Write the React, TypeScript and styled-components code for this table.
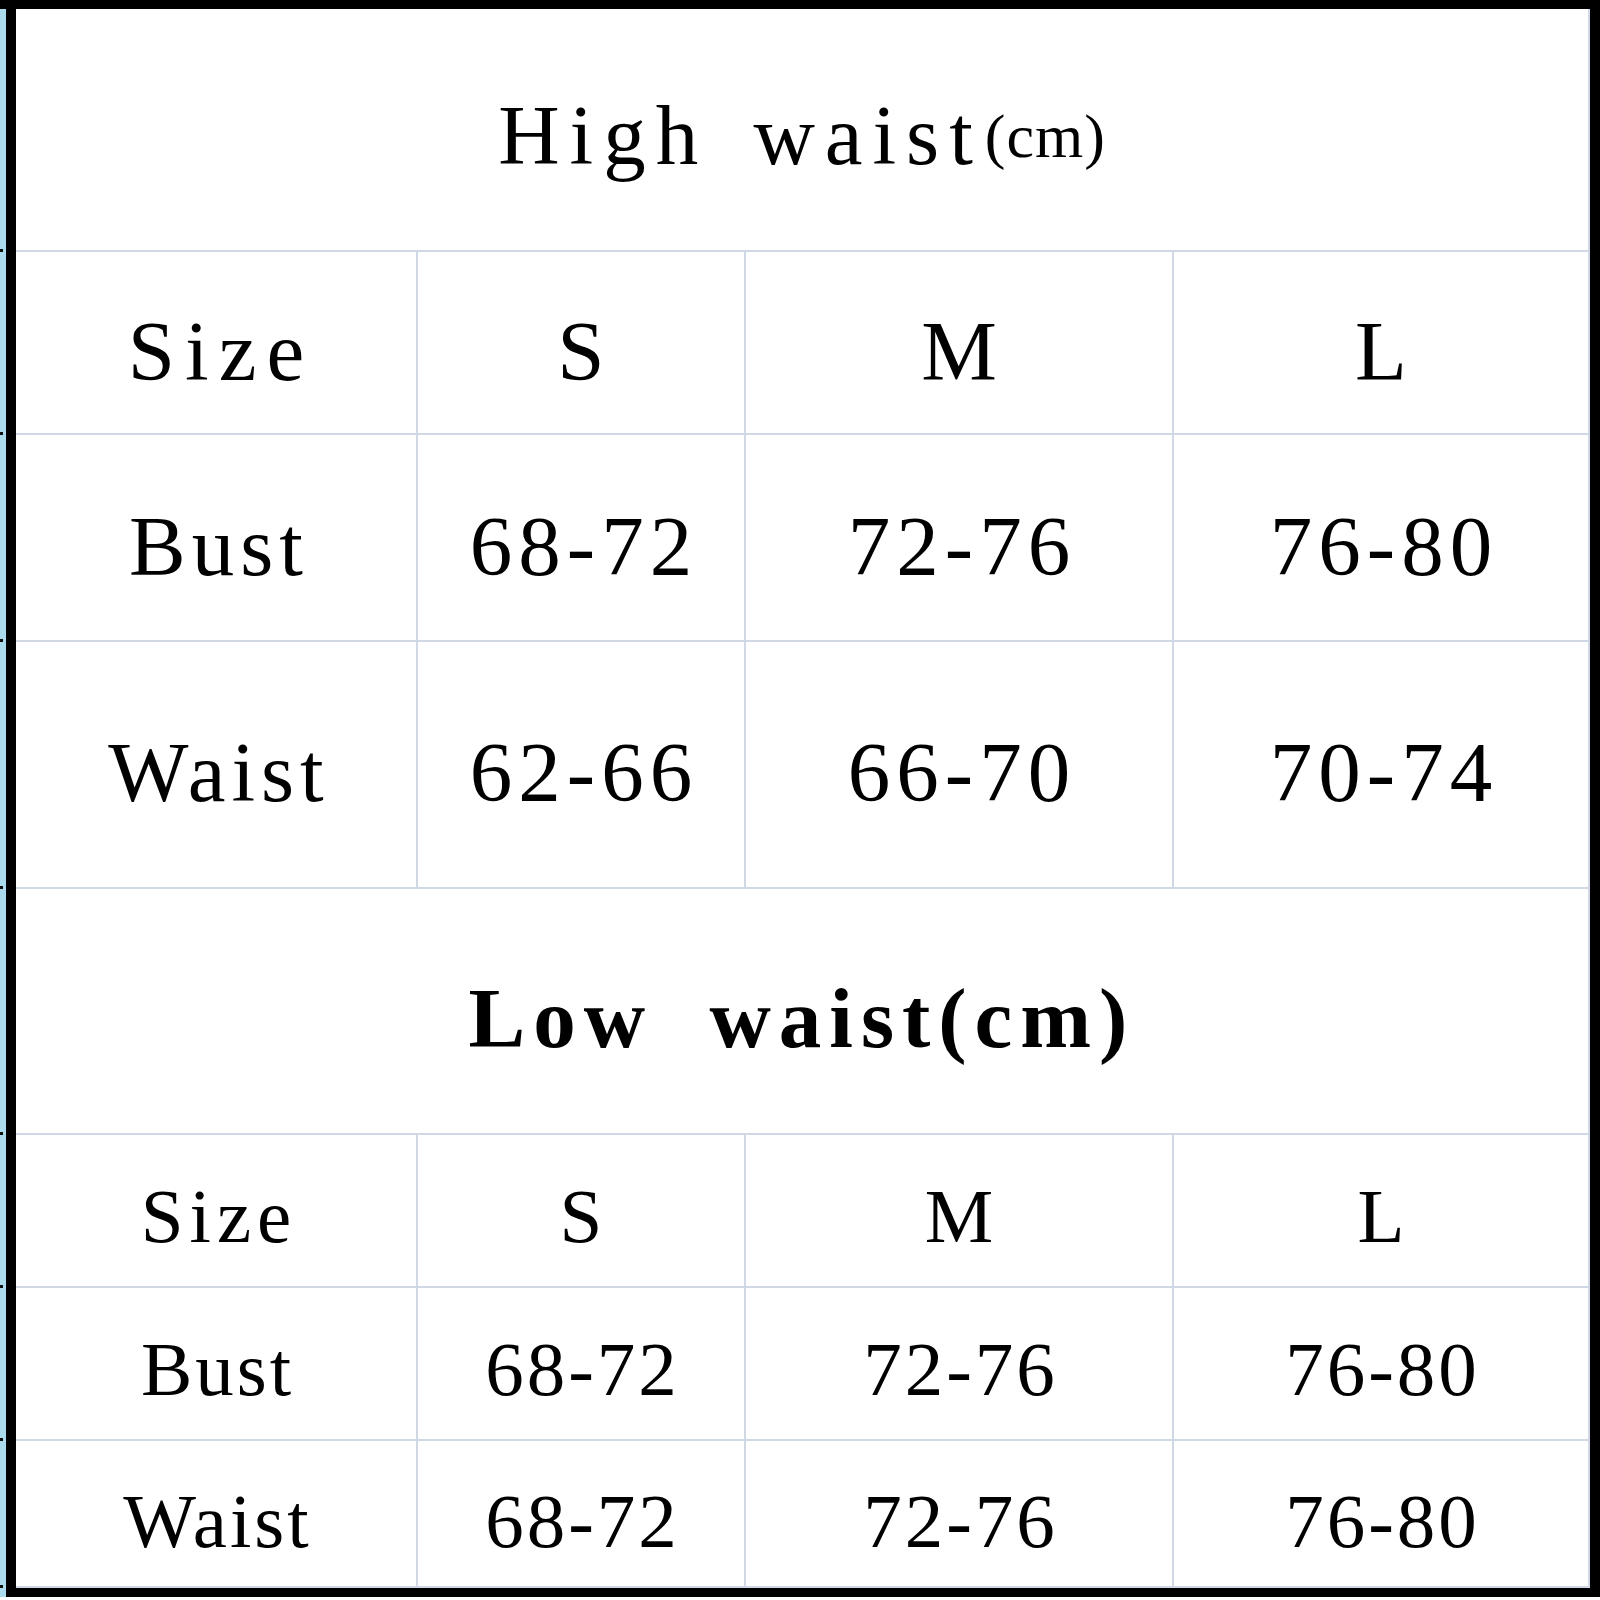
import React from "react";
import styled, { createGlobalStyle } from "styled-components";

const GlobalStyle = createGlobalStyle`
  html, body {
    margin: 0;
    padding: 0;
    background: #ffffff;
  }
`;

const LINE = "#d0d7e5";
const FONT = `"Liberation Serif", "Times New Roman", serif`;

// row heights inside the sheet, gridlines are the 2px gaps between them
const ROWS = [241, 181, 205, 245, 244, 151, 151, 145];

type Section = {
  title: string;
  unit: string;
  bold: boolean;
  big: boolean;
  rows: string[][];
};

const sections: Section[] = [
  {
    title: "High waist",
    unit: "(cm)",
    bold: false,
    big: true,
    rows: [
      ["Size", "S", "M", "L"],
      ["Bust", "68-72", "72-76", "76-80"],
      ["Waist", "62-66", "66-70", "70-74"],
    ],
  },
  {
    title: "Low waist",
    unit: "(cm)",
    bold: true,
    big: false,
    rows: [
      ["Size", "S", "M", "L"],
      ["Bust", "68-72", "72-76", "76-80"],
      ["Waist", "68-72", "72-76", "76-80"],
    ],
  },
];

const Page = styled.div`
  width: 1600px;
  height: 1600px;
  display: flex;
  flex-direction: column;
  overflow: hidden;
`;

const TopBar = styled.div`
  height: 9px;
  background: #000;
  flex: none;
`;

const Middle = styled.div`
  display: flex;
  flex: none;
`;

const RowHeader = styled.div`
  width: 6px;
  background: #aadcee;
  display: flex;
  flex-direction: column;
  gap: 2px;
`;

const HeaderSeg = styled.div<{ $h: number }>`
  height: ${(p) => p.$h}px;
  position: relative;
  &::after {
    content: "";
    position: absolute;
    left: 0;
    bottom: -2px;
    width: 3px;
    height: 3px;
    background: #111;
  }
`;

const Frame = styled.div`
  border-left: 10px solid #000;
  border-right: 10px solid #000;
  border-bottom: 9px solid #000;
`;

const Sheet = styled.div`
  display: grid;
  grid-template-columns: 400px 326px 426px 414px;
  grid-template-rows: ${ROWS.map((r) => `${r}px`).join(" ")};
  gap: 2px;
  padding: 0 2px 2px 0;
  background: ${LINE};
  width: 1572px;
`;

const Cell = styled.div<{ $size: number; $shift: number; $spacing: number }>`
  background: #fff;
  display: flex;
  align-items: center;
  justify-content: center;
  font-family: ${FONT};
  font-size: ${(p) => p.$size}px;
  line-height: 1;
  letter-spacing: ${(p) => p.$spacing}px;
  text-indent: ${(p) => p.$spacing}px;
  color: #000;
  padding-top: ${(p) => p.$shift}px;
  box-sizing: border-box;
  white-space: nowrap;
`;

const TitleCell = styled.div<{ $bold: boolean; $shift: number }>`
  grid-column: 1 / -1;
  background: #fff;
  display: flex;
  align-items: center;
  justify-content: center;
  font-family: ${FONT};
  font-size: 85px;
  line-height: 1;
  font-weight: ${(p) => (p.$bold ? 700 : 400)};
  letter-spacing: ${(p) => (p.$bold ? 8 : 10)}px;
  word-spacing: ${(p) => (p.$bold ? 27 : 14)}px;
  color: #000;
  padding-top: ${(p) => p.$shift}px;
  box-sizing: border-box;
  white-space: nowrap;
`;

const Unit = styled.span<{ $small: boolean }>`
  font-size: ${(p) => (p.$small ? 62 : 85)}px;
  letter-spacing: ${(p) => (p.$small ? 1 : 8)}px;
  margin-left: ${(p) => (p.$small ? 2 : 0)}px;
`;

function spacingFor(text: string, big: boolean) {
  if (text === "Size") return big ? 10 : 6;
  return big ? 6 : 3;
}

export default function App() {
  return (
    <Page>
      <GlobalStyle />
      <TopBar />
      <Middle>
        <RowHeader>
          {ROWS.map((h, i) => (
            <HeaderSeg key={i} $h={h} />
          ))}
        </RowHeader>
        <Frame>
          <Sheet>
            {sections.map((s) => (
              <React.Fragment key={s.title}>
                <TitleCell $bold={s.bold} $shift={s.big ? 12 : 14}>
                  {s.title}
                  <Unit $small={s.big}>{s.unit}</Unit>
                </TitleCell>
                {s.rows.map((row, ri) =>
                  row.map((text, ci) => (
                    <Cell
                      key={`${s.title}-${ri}-${ci}`}
                      $size={s.big ? 85 : 77}
                      $spacing={spacingFor(text, s.big)}
                      $shift={s.big ? [18, 17, 16][ri] : [12, 12, 16][ri]}
                    >
                      {text}
                    </Cell>
                  ))
                )}
              </React.Fragment>
            ))}
          </Sheet>
        </Frame>
      </Middle>
    </Page>
  );
}
